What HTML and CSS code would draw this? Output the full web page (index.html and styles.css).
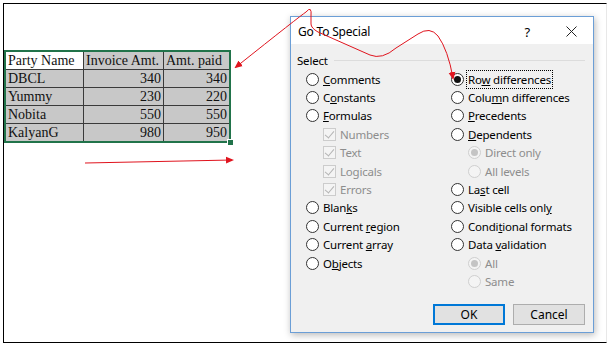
FILE: index.html
```html
<!DOCTYPE html>
<html lang="en">
<head>
<meta charset="utf-8">
<title>Go To Special</title>
<link rel="stylesheet" href="styles.css">
</head>
<body>
<div class="frame">
    <div class="sheet">
        <table class="grid">
            <tr><td class="active">Party Name</td><td>Invoice Amt.</td><td>Amt. paid</td></tr>
            <tr><td>DBCL</td><td class="num">340</td><td class="num">340</td></tr>
            <tr><td>Yummy</td><td class="num">230</td><td class="num">220</td></tr>
            <tr><td>Nobita</td><td class="num">550</td><td class="num">550</td></tr>
            <tr><td>KalyanG</td><td class="num">980</td><td class="num">950</td></tr>
        </table>
        <span class="fill-handle"></span>
    </div>

    <div class="dialog">
        <div class="titlebar">
            <span class="title">Go To Special</span>
            <span class="help">?</span>
            <svg class="close" width="11" height="11" viewBox="0 0 11 11"><path d="M0.5 0.5 L10.5 10.5 M10.5 0.5 L0.5 10.5" stroke="#222" stroke-width="1"/></svg>
        </div>
        <div class="body">
            <div class="group-label"><span>Select</span></div>
            <div class="columns">
                <div class="col">
                    <div class="opt"><span class="radio"></span><span><u>C</u>omments</span></div>
                    <div class="opt"><span class="radio"></span><span>C<u>o</u>nstants</span></div>
                    <div class="opt"><span class="radio"></span><span><u>F</u>ormulas</span></div>
                    <div class="opt sub off"><span class="check"></span><span>Numbers</span></div>
                    <div class="opt sub off"><span class="check"></span><span>Text</span></div>
                    <div class="opt sub off"><span class="check"></span><span>Logicals</span></div>
                    <div class="opt sub off"><span class="check"></span><span>Errors</span></div>
                    <div class="opt"><span class="radio"></span><span>Blan<u>k</u>s</span></div>
                    <div class="opt"><span class="radio"></span><span>Current <u>r</u>egion</span></div>
                    <div class="opt"><span class="radio"></span><span>Current <u>a</u>rray</span></div>
                    <div class="opt"><span class="radio"></span><span>O<u>b</u>jects</span></div>
                </div>
                <div class="col">
                    <div class="opt"><span class="radio on"></span><span class="focus">Ro<u>w</u> differences</span></div>
                    <div class="opt"><span class="radio"></span><span>Colu<u>m</u>n differences</span></div>
                    <div class="opt"><span class="radio"></span><span><u>P</u>recedents</span></div>
                    <div class="opt"><span class="radio"></span><span><u>D</u>ependents</span></div>
                    <div class="opt sub off"><span class="radio on"></span><span>Direct only</span></div>
                    <div class="opt sub off"><span class="radio"></span><span>All levels</span></div>
                    <div class="opt"><span class="radio"></span><span>La<u>s</u>t cell</span></div>
                    <div class="opt"><span class="radio"></span><span>Visible cells onl<u>y</u></span></div>
                    <div class="opt"><span class="radio"></span><span>Condi<u>t</u>ional formats</span></div>
                    <div class="opt"><span class="radio"></span><span>Data <u>v</u>alidation</span></div>
                    <div class="opt sub off"><span class="radio on"></span><span>All</span></div>
                    <div class="opt sub off"><span class="radio"></span><span>Same</span></div>
                </div>
            </div>
            <div class="buttons">
                <button class="btn default">OK</button>
                <button class="btn">Cancel</button>
            </div>
        </div>
    </div>

    <!-- annotation arrows drawn over the screenshot -->
    <svg class="marks" width="611" height="348" viewBox="0 0 611 348">
        <defs>
            <marker id="head" markerWidth="8" markerHeight="8" refX="6" refY="4" orient="auto" markerUnits="userSpaceOnUse">
                <path d="M0 0.5 L8 4 L0 7.5 Z" fill="#e0141e"/>
            </marker>
        </defs>
        <path d="M306 12 Q 300 16 236 67" fill="none" stroke="#e0141e" stroke-width="1" marker-end="url(#head)"/>
        <path d="M306 12 Q 312 5 311 16 L 311 24 Q 311 28 318 32 L 370 55 Q 382 60 396 48 L 418 34 Q 430 26 438 36 Q 448 50 453 78" fill="none" stroke="#e0141e" stroke-width="1" marker-end="url(#head)"/>
        <path d="M85 163 L 232 160" fill="none" stroke="#e0141e" stroke-width="1.2" marker-end="url(#head)"/>
    </svg>
</div>
</body>
</html>
```

FILE: styles.css
```css
body {
    margin: 0;
    background-color: #fff;
    font-family: "Segoe UI", "Noto Sans", sans-serif;
}

.frame {
    position: relative;
    display: flex;
    align-items: flex-start;
    width: 611px;
    height: 348px;
    box-sizing: border-box;
    padding: 3px 0 0 3px;
}

.frame::before {
    content: "";
    position: absolute;
    left: 3px;
    top: 3px;
    width: 604px;
    height: 340px;
    border: 1px solid #000;
    border-right-color: #e8e8e8;
    box-sizing: border-box;
}

.sheet {
    position: relative;
    margin: 47px 0 0 1px;
}

.grid {
    border-collapse: collapse;
    border: 2px solid #21734a;
    font-family: "Liberation Serif", "Times New Roman", serif;
    font-size: 14px;
    color: #111;
}

.grid td {
    background-color: #c8c8c8;
    border: 1px solid #3a3a3a;
    height: 17px;
    padding: 0 2px;
    line-height: 17px;
    white-space: nowrap;
}

.grid td:nth-child(1) { width: 73px; }
.grid td:nth-child(2) { width: 75px; }
.grid td:nth-child(3) { width: 61px; }

.grid tr:first-child td { border-top: none; }
.grid td:first-child { border-left: none; }
.grid td:last-child { border-right: none; }
.grid tr:last-child td { border-bottom: none; }

.grid td.active {
    background-color: #fff;
}

.grid td.num {
    text-align: right;
}

.fill-handle {
    position: absolute;
    right: -3px;
    bottom: -3px;
    width: 5px;
    height: 5px;
    background-color: #21734a;
    border: 1px solid #fff;
}

.dialog {
    margin: 13px 0 0 59px;
    width: 304px;
    height: 317px;
    box-sizing: border-box;
    border: 1px solid #6b9ed6;
    background-color: #f0f0f0;
    box-shadow: 1px 2px 7px rgba(0, 0, 0, 0.28);
    display: flex;
    flex-direction: column;
    font-size: 11.5px;
    letter-spacing: -0.2px;
    color: #000;
}

.titlebar {
    height: 27px;
    background-color: #fff;
    display: flex;
    align-items: center;
    padding: 2px 0 0 7px;
    box-sizing: border-box;
}

.title {
    flex: 1;
    font-size: 12px;
}

.help {
    font-size: 13px;
    margin-right: 36px;
}

.close {
    margin-right: 16px;
}

.body {
    flex: 1;
    display: flex;
    flex-direction: column;
    padding: 8px 8px 7px 6px;
}

.group-label {
    display: flex;
    align-items: center;
    gap: 6px;
    height: 16px;
}

.group-label::after {
    content: "";
    flex: 1;
    border-top: 1px solid #dcdcdc;
}

.columns {
    display: flex;
    padding: 2px 0 0 9px;
}

.col {
    display: flex;
    flex-direction: column;
}

.col:first-child {
    width: 145px;
}

.opt {
    height: 18.4px;
    display: flex;
    align-items: center;
    gap: 4px;
    white-space: nowrap;
}

.opt.sub {
    padding-left: 17px;
}

.opt.off {
    color: #8d8d8d;
}

.radio {
    width: 13px;
    height: 13px;
    box-sizing: border-box;
    border: 1px solid #333;
    border-radius: 50%;
    background-color: #fff;
    display: inline-flex;
    align-items: center;
    justify-content: center;
}

.radio.on::after {
    content: "";
    width: 7px;
    height: 7px;
    border-radius: 50%;
    background-color: #111;
}

.off .radio {
    border-color: #cfcfcf;
    background-color: #f4f4f4;
}

.off .radio.on::after {
    background-color: #c4c4c4;
}

.check {
    position: relative;
    width: 13px;
    height: 13px;
    box-sizing: border-box;
    border: 1px solid #cccccc;
    background-color: #f4f4f4;
}

.check::after {
    content: "";
    position: absolute;
    left: 3px;
    top: 0px;
    width: 4px;
    height: 8px;
    border: solid #b4b4b4;
    border-width: 0 1px 1px 0;
    transform: rotate(40deg);
}

.focus {
    outline: 1px dotted #000;
    outline-offset: 1px;
}

.buttons {
    margin-top: auto;
    display: flex;
    justify-content: flex-end;
    gap: 8px;
}

.btn {
    width: 72px;
    height: 21px;
    font-family: inherit;
    font-size: 12px;
    background-color: #e1e1e1;
    border: 1px solid #adadad;
    padding: 0;
    color: #000;
}

.btn.default {
    border: 2px solid #0078d7;
}

.marks {
    position: absolute;
    left: 0;
    top: 0;
    pointer-events: none;
}
```
